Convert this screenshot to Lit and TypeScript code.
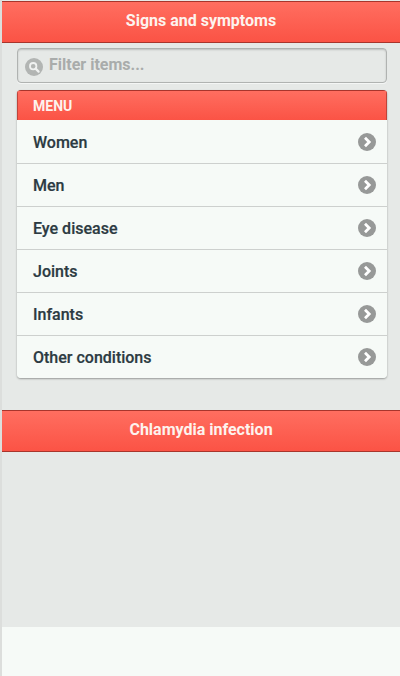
import { LitElement, html, css } from "lit";
import { customElement } from "lit/decorators.js";

const ITEMS = ["Women", "Men", "Eye disease", "Joints", "Infants", "Other conditions"];

@customElement("app-root")
export class AppRoot extends LitElement {
  static styles = css`
    :host { display: block; width: 400px; height: 676px; overflow: hidden; font-family: Roboto, "Liberation Sans", sans-serif; background: #dcdedc; }
    .page { margin-left: 2px; height: 676px; display: flex; flex-direction: column; background: #e6e9e7; }
    .bar { height: 40px; margin-top: 1px; border-top: 1px solid #a8352c; border-bottom: 1px solid #a8352c; background: linear-gradient(#ff6e60, #fb5345); display: flex; align-items: center; justify-content: center; color: #fdf3ee; font-size: 16px; font-weight: 700; flex: none; }
    .bar span { position: relative; top: -2px; }
    .content { padding: 5px 13px 0 15px; flex: none; }
    .filter { height: 33px; border: 1px solid #b0b3b1; border-radius: 4px; background: #e6e9e7; box-shadow: inset 0 1px 2px rgba(0,0,0,.18), 0 1px 0 #f4f6f5; display: flex; align-items: center; gap: 6px; padding-left: 7px; color: #a9acab; font-size: 16px; font-weight: 700; }
    .filter svg { flex: none; position: relative; top: 1px; }
    .filter span { position: relative; top: -1px; }
    .menu { margin-top: 7px; border-radius: 4px; box-shadow: 0 1px 2px rgba(0,0,0,.35); overflow: hidden; }
    .menu-head { height: 29px; border-top: 1px solid #a8352c; background: linear-gradient(#ff6e60, #fb5345); color: #fdf3ee; font-size: 14px; font-weight: 700; padding-left: 16px; display: flex; align-items: center; box-shadow: inset -1px 0 0 #c0443a, inset 1px 0 0 #c0443a; }
    .row { height: 42px; border-top: 1px solid #cdd0ce; background: #f6faf7; display: flex; align-items: center; justify-content: space-between; padding: 0 11px 0 16px; color: #2c3a42; font-size: 16px; font-weight: 500; -webkit-text-stroke: 0.2px #2c3a42; }
    .row.first { border-top: 1px solid #f6faf7; }
    .second { margin-top: 32px; }
    .fill { flex: none; height: 175px; }
    .tail { flex: 1; background: #f6faf7; }
  `;

  render() {
    return html`<div class="page">
      <div class="bar"><span>Signs and symptoms</span></div>
      <div class="content">
        <div class="filter">
          <svg width="18" height="18" viewBox="0 0 18 18" aria-hidden="true">
            <circle cx="9" cy="9" r="9" fill="#b2b5b3"></circle>
            <circle cx="8.2" cy="8.2" r="3.2" fill="none" stroke="#f0f2f1" stroke-width="1.8"></circle>
            <path d="M10.6 10.6 13.6 13.6" stroke="#f0f2f1" stroke-width="2.2" stroke-linecap="round"></path>
          </svg>
          <span>Filter items...</span>
        </div>
        <div class="menu">
          <div class="menu-head">MENU</div>
          ${ITEMS.map(
            (t, i) => html`<div class="row ${i === 0 ? "first" : ""}">
              <span>${t}</span>
              <svg width="18" height="18" viewBox="0 0 18 18" aria-hidden="true">
                <circle cx="9" cy="9" r="9" fill="#979998"></circle>
                <path d="M7 4.8 11.2 9 7 13.2" fill="none" stroke="#fff" stroke-width="2.8"></path>
              </svg>
            </div>`
          )}
        </div>
      </div>
      <div class="bar second"><span>Chlamydia infection</span></div>
      <div class="fill"></div>
      <div class="tail"></div>
    </div>`;
  }
}
